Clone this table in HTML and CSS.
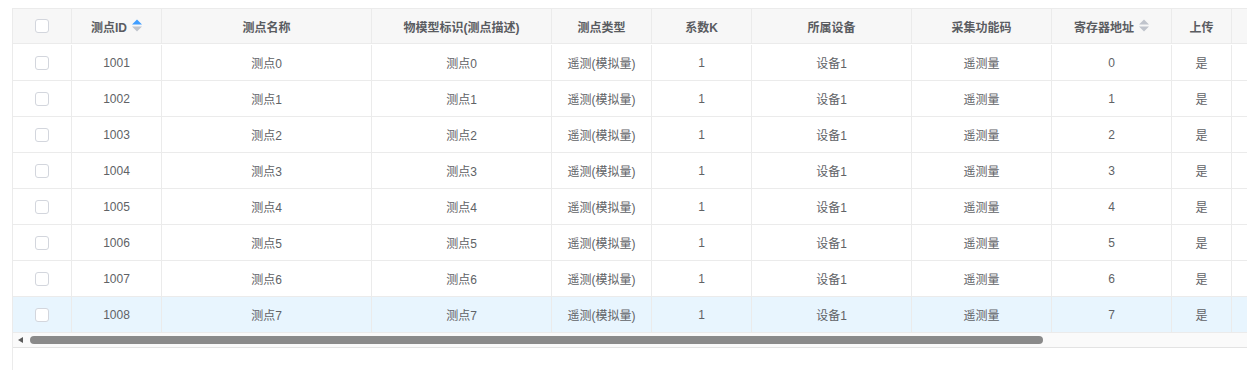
FILE: index.html
```html
<!DOCTYPE html>
<html lang="zh">
<head>
<meta charset="utf-8">
<title>测点列表</title>
<link rel="stylesheet" href="styles.css">
</head>
<body>
<div class="wrap">
  <div class="grid">
    <div class="cell head"><span class="cb"></span></div>
    <div class="cell head">测点ID<svg class="sort" width="10" height="13" viewBox="0 0 10 13"><polygon points="0,5.5 5,0.5 10,5.5" fill="#409eff"/><polygon points="0,7.5 10,7.5 5,12.5" fill="#c0c4cc"/></svg></div>
    <div class="cell head">测点名称</div>
    <div class="cell head">物模型标识(测点描述)</div>
    <div class="cell head">测点类型</div>
    <div class="cell head">系数K</div>
    <div class="cell head">所属设备</div>
    <div class="cell head">采集功能码</div>
    <div class="cell head">寄存器地址<svg class="sort" width="10" height="13" viewBox="0 0 10 13"><polygon points="0,5.5 5,0.5 10,5.5" fill="#c0c4cc"/><polygon points="0,7.5 10,7.5 5,12.5" fill="#c0c4cc"/></svg></div>
    <div class="cell head">上传</div>
    <div class="cell head"></div>

    <div class="cell"><span class="cb"></span></div><div class="cell">1001</div><div class="cell">测点0</div><div class="cell">测点0</div><div class="cell">遥测(模拟量)</div><div class="cell">1</div><div class="cell">设备1</div><div class="cell">遥测量</div><div class="cell">0</div><div class="cell">是</div><div class="cell"></div>
    <div class="cell"><span class="cb"></span></div><div class="cell">1002</div><div class="cell">测点1</div><div class="cell">测点1</div><div class="cell">遥测(模拟量)</div><div class="cell">1</div><div class="cell">设备1</div><div class="cell">遥测量</div><div class="cell">1</div><div class="cell">是</div><div class="cell"></div>
    <div class="cell"><span class="cb"></span></div><div class="cell">1003</div><div class="cell">测点2</div><div class="cell">测点2</div><div class="cell">遥测(模拟量)</div><div class="cell">1</div><div class="cell">设备1</div><div class="cell">遥测量</div><div class="cell">2</div><div class="cell">是</div><div class="cell"></div>
    <div class="cell"><span class="cb"></span></div><div class="cell">1004</div><div class="cell">测点3</div><div class="cell">测点3</div><div class="cell">遥测(模拟量)</div><div class="cell">1</div><div class="cell">设备1</div><div class="cell">遥测量</div><div class="cell">3</div><div class="cell">是</div><div class="cell"></div>
    <div class="cell"><span class="cb"></span></div><div class="cell">1005</div><div class="cell">测点4</div><div class="cell">测点4</div><div class="cell">遥测(模拟量)</div><div class="cell">1</div><div class="cell">设备1</div><div class="cell">遥测量</div><div class="cell">4</div><div class="cell">是</div><div class="cell"></div>
    <div class="cell"><span class="cb"></span></div><div class="cell">1006</div><div class="cell">测点5</div><div class="cell">测点5</div><div class="cell">遥测(模拟量)</div><div class="cell">1</div><div class="cell">设备1</div><div class="cell">遥测量</div><div class="cell">5</div><div class="cell">是</div><div class="cell"></div>
    <div class="cell"><span class="cb"></span></div><div class="cell">1007</div><div class="cell">测点6</div><div class="cell">测点6</div><div class="cell">遥测(模拟量)</div><div class="cell">1</div><div class="cell">设备1</div><div class="cell">遥测量</div><div class="cell">6</div><div class="cell">是</div><div class="cell"></div>
    <div class="cell hl"><span class="cb"></span></div><div class="cell hl">1008</div><div class="cell hl">测点7</div><div class="cell hl">测点7</div><div class="cell hl">遥测(模拟量)</div><div class="cell hl">1</div><div class="cell hl">设备1</div><div class="cell hl">遥测量</div><div class="cell hl">7</div><div class="cell hl">是</div><div class="cell hl"></div>
  </div>
  <div class="hscroll">
    <span class="arrow"></span>
    <span class="thumb"></span>
  </div>
</div>
</body>
</html>
```
FILE: styles.css
```css
html, body {
  margin: 0;
  padding: 0;
  background: #fff;
  overflow: hidden;
}
body {
  font-family: "Liberation Sans", "Noto Sans CJK SC", sans-serif;
  font-size: 12px;
  color: #606266;
}
.wrap {
  margin: 8px 0 0 12px;
  height: 362px;
  overflow: hidden;
  border-left: 1px solid #ebebeb;
  border-top: 1px solid #ebebeb;
}
.grid {
  display: grid;
  width: 1420px;
  grid-template-columns: 59px 90px 210px 180px 100px 100px 160px 140px 120px 60px 201px;
  grid-auto-rows: 36px;
}
.cell {
  box-sizing: border-box;
  border-right: 1px solid #ebebeb;
  border-bottom: 1px solid #ebebeb;
  display: flex;
  align-items: center;
  justify-content: center;
  white-space: nowrap;
  background: #fff;
}
.cell.head {
  height: 35px;
  background: #f7f7f7;
  font-weight: bold;
  color: #5a5c61;
}
.cell.hl {
  background: #e8f5fe;
}
.cb {
  box-sizing: border-box;
  width: 14px;
  height: 14px;
  border: 1px solid #d3d6dd;
  border-radius: 3px;
  background: #fff;
}
.sort {
  margin-left: 5px;
  margin-top: -1px;
}
.hscroll {
  position: relative;
  width: 1420px;
  height: 14px;
  background: #fafafa;
  border-bottom: 1px solid #e3e3e3;
}
.arrow {
  position: absolute;
  left: 5px;
  top: 4px;
  width: 0;
  height: 0;
  border-top: 3px solid transparent;
  border-bottom: 3px solid transparent;
  border-right: 5px solid #5b5b5b;
}
.thumb {
  position: absolute;
  left: 17px;
  top: 3px;
  width: 1013px;
  height: 8px;
  border-radius: 4px;
  background: #8a8a8a;
}
```
